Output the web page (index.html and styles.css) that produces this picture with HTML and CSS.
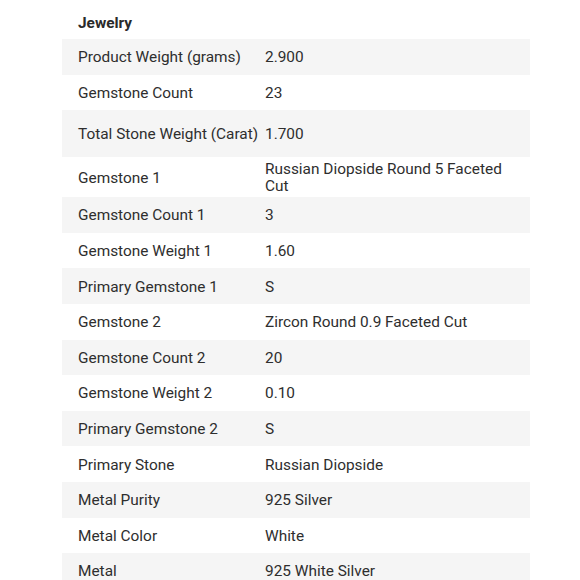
FILE: index.html
```html
<!DOCTYPE html>
<html>
<head>
<meta charset="utf-8">
<link rel="stylesheet" href="styles.css">
</head>
<body>
<div class="specs">
  <h2 class="title">Jewelry</h2>
  <div class="table">
    <div class="row"><div class="k">Product Weight (grams)</div><div class="v">2.900</div></div>
    <div class="row"><div class="k">Gemstone Count</div><div class="v">23</div></div>
    <div class="row tall"><div class="k">Total Stone Weight (Carat)</div><div class="v">1.700</div></div>
    <div class="row"><div class="k">Gemstone 1</div><div class="v">Russian Diopside Round 5 Faceted Cut</div></div>
    <div class="row"><div class="k">Gemstone Count 1</div><div class="v">3</div></div>
    <div class="row"><div class="k">Gemstone Weight 1</div><div class="v">1.60</div></div>
    <div class="row"><div class="k">Primary Gemstone 1</div><div class="v">S</div></div>
    <div class="row"><div class="k">Gemstone 2</div><div class="v">Zircon Round 0.9 Faceted Cut</div></div>
    <div class="row"><div class="k">Gemstone Count 2</div><div class="v">20</div></div>
    <div class="row"><div class="k">Gemstone Weight 2</div><div class="v">0.10</div></div>
    <div class="row"><div class="k">Primary Gemstone 2</div><div class="v">S</div></div>
    <div class="row"><div class="k">Primary Stone</div><div class="v">Russian Diopside</div></div>
    <div class="row"><div class="k">Metal Purity</div><div class="v">925 Silver</div></div>
    <div class="row"><div class="k">Metal Color</div><div class="v">White</div></div>
    <div class="row"><div class="k">Metal</div><div class="v">925 White Silver</div></div>
  </div>
</div>
</body>
</html>
```
FILE: styles.css
```css
html, body {
  margin: 0;
  padding: 0;
  background: #ffffff;
}
body {
  font-family: Roboto, "Noto Sans", Arial, sans-serif;
  color: #2e2e2e;
  font-size: 15.4px;
}
.specs {
  width: 468px;
  margin-left: 62px;
}
.title {
  margin: 0;
  padding: 14px 0 0 16px;
  height: 25px;
  font-size: 15.4px;
  font-weight: 700;
  line-height: 18px;
  color: #2a2a2a;
}
.table {
  display: flex;
  flex-direction: column;
}
.row {
  display: grid;
  grid-template-columns: 196px 1fr;
  align-items: center;
  min-height: 35.6px;
  padding: 4px 0 2px;
  box-sizing: border-box;
  line-height: 17px;
}
.row:nth-child(odd) {
  background: #f5f5f5;
}
.row.tall {
  min-height: 47px;
}
.k {
  padding-left: 16px;
  white-space: nowrap;
}
.v {
  padding-left: 7px;
  padding-right: 14px;
}
```
